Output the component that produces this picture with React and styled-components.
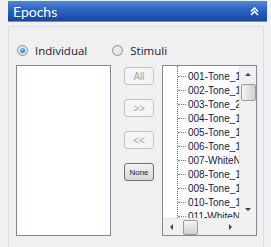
import React from "react";
import styled, { createGlobalStyle } from "styled-components";

const Global = createGlobalStyle`
  body {
    margin: 0;
    background: #f0f0f0;
    font-family: "Open Sans", "DejaVu Sans", sans-serif;
  }
`;

const Page = styled.div`
  padding: 1px 4px 0 8px;
  width: 259px;
`;

const Header = styled.div`
  height: 20px;
  display: flex;
  align-items: center;
  justify-content: space-between;
  padding: 0 8px 0 5px;
  background: linear-gradient(to bottom, #5286d6 0%, #2c62c0 45%, #1746a6 100%);
  border-bottom: 1px solid #8b8a80;
  color: #fff;
  font-family: Lato, "Open Sans", sans-serif;
  font-size: 14px;
`;

const Panel = styled.div`
  margin-top: 4px;
  width: 256px;
  height: 230px;
  border: 1px solid #d6dee8;
  border-radius: 2px;
  background: #f0f0f0;
  padding: 0 0 0 7px;
  box-sizing: border-box;
`;

const RadioRow = styled.div`
  display: flex;
  align-items: center;
  height: 24px;
  margin-top: 11px;
  padding-left: 1px;
`;

const RadioLabel = styled.label`
  display: flex;
  align-items: center;
  gap: 7px;
  font-size: 11.5px;
  color: #1a1a2a;
  margin-right: ${p => p.$gap}px;
`;

const RadioDot = styled.span`
  width: 11px;
  height: 11px;
  border-radius: 50%;
  border: 1px solid #8e9297;
  background: radial-gradient(circle, #f4f4f4 0%, #d8d8d8 100%);
  display: flex;
  align-items: center;
  justify-content: center;
  box-sizing: border-box;
  &::after {
    content: "";
    width: 5px;
    height: 5px;
    border-radius: 50%;
    background: ${p => (p.$on ? "radial-gradient(circle at 40% 35%, #6fd3ff, #0a5aa8)" : "transparent")};
  }
`;

const Columns = styled.div`
  display: flex;
  margin-top: 3px;
`;

const ListBox = styled.div`
  width: 95px;
  height: 171px;
  border: 1px solid #828790;
  background: #fff;
  box-sizing: border-box;
  position: relative;
  overflow: hidden;
  display: ${p => (p.$tree ? "grid" : "block")};
  grid-template-columns: 1fr 17px;
  grid-template-rows: 1fr 17px;
`;

const ButtonCol = styled.div`
  width: 30px;
  margin: 2px 8px 0 13px;
  display: flex;
  flex-direction: column;
  gap: 14px;
`;

const Btn = styled.button`
  width: 30px;
  height: 18px;
  padding: 0;
  border-radius: 3px;
  font-family: "Liberation Sans", Arial, sans-serif;
  font-size: ${p => (p.$small ? "8px" : "10px")};
  border: 1px solid ${p => (p.disabled ? "#c3c3c3" : "#707070")};
  background: ${p => (p.disabled ? "#f4f4f4" : "linear-gradient(#f3f3f3, #e4e4e4 50%, #d6d6d6)")};
  color: ${p => (p.disabled ? "#a6a6a6" : "#1c1c3c")};
`;

const TreeArea = styled.div`
  position: relative;
  overflow: hidden;
  padding-top: 3px;
  &::before {
    content: "";
    position: absolute;
    left: 14px;
    top: 0;
    bottom: 0;
    border-left: 1px dotted #7a7a7a;
  }
`;

const TreeItem = styled.div`
  height: 14px;
  display: flex;
  align-items: center;
  padding-left: 15px;
  font-family: "Liberation Sans", Arial, sans-serif;
  font-size: 10px;
  color: #141840;
  white-space: nowrap;
  &::before {
    content: "";
    width: 8px;
    border-top: 1px dotted #7a7a7a;
    margin-right: 2px;
    flex: none;
  }
`;

const VScroll = styled.div`
  background: #f0f0f0;
  border-left: 1px solid #e8e8e8;
  display: flex;
  flex-direction: column;
  align-items: center;
`;

const HScroll = styled.div`
  background: #f0f0f0;
  border-top: 1px solid #e8e8e8;
  display: flex;
  align-items: center;
`;

const Corner = styled.div`
  background: #f0f0f0;
`;

const Arrow = styled.span`
  width: 17px;
  height: 17px;
  display: flex;
  align-items: center;
  justify-content: center;
  flex: none;
  &::after {
    content: "";
    border: 3px solid transparent;
    ${p =>
      p.$dir === "up"
        ? "border-bottom: 3px solid #404040; border-top: 0;"
        : p.$dir === "down"
        ? "border-top: 3px solid #404040; border-bottom: 0;"
        : p.$dir === "left"
        ? "border-right: 3px solid #404040; border-left: 0;"
        : "border-left: 3px solid #404040; border-right: 0;"}
  }
`;

const Thumb = styled.span`
  flex: none;
  width: 15px;
  height: ${p => (p.$h ? "15px" : "17px")};
  margin: ${p => (p.$h ? "0 0 0 3px" : "1px 0 0 0")};
  border: 1px solid #9a9a9a;
  border-radius: 2px;
  box-sizing: border-box;
  background: ${p =>
    p.$h
      ? "linear-gradient(#f6f6f6, #e0e0e0 50%, #d2d2d2)"
      : "linear-gradient(to right, #f6f6f6, #e0e0e0 50%, #d2d2d2)"};
`;

const Spacer = styled.span`
  flex: 1;
`;

const items = [
  "001-Tone_1000Hz",
  "002-Tone_1000Hz",
  "003-Tone_2000Hz",
  "004-Tone_1000Hz",
  "005-Tone_1000Hz",
  "006-Tone_1000Hz",
  "007-WhiteNoise",
  "008-Tone_1000Hz",
  "009-Tone_1000Hz",
  "010-Tone_1000Hz",
  "011-WhiteNoise",
];

function CollapseIcon() {
  return (
    <svg width="9" height="9" viewBox="0 0 9 9">
      <path d="M1 4.5 L4.5 1 L8 4.5 M1 8 L4.5 4.5 L8 8" fill="none" stroke="#fff" strokeWidth="1.6" />
    </svg>
  );
}

export default function App() {
  return (
    <Page>
      <Global />
      <Header>
        <span>Epochs</span>
        <CollapseIcon />
      </Header>
      <Panel>
        <RadioRow>
          <RadioLabel $gap={25}>
            <RadioDot $on />
            Individual
          </RadioLabel>
          <RadioLabel $gap={0}>
            <RadioDot />
            Stimuli
          </RadioLabel>
        </RadioRow>
        <Columns>
          <ListBox />
          <ButtonCol>
            <Btn disabled>All</Btn>
            <Btn disabled>&gt;&gt;</Btn>
            <Btn disabled>&lt;&lt;</Btn>
            <Btn $small>None</Btn>
          </ButtonCol>
          <ListBox $tree>
            <TreeArea>
              {items.map(t => (
                <TreeItem key={t}>{t}</TreeItem>
              ))}
            </TreeArea>
            <VScroll>
              <Arrow $dir="up" />
              <Thumb />
              <Spacer />
              <Arrow $dir="down" />
            </VScroll>
            <HScroll>
              <Arrow $dir="left" />
              <Thumb $h />
              <Spacer />
              <Arrow $dir="right" />
            </HScroll>
            <Corner />
          </ListBox>
        </Columns>
      </Panel>
    </Page>
  );
}
